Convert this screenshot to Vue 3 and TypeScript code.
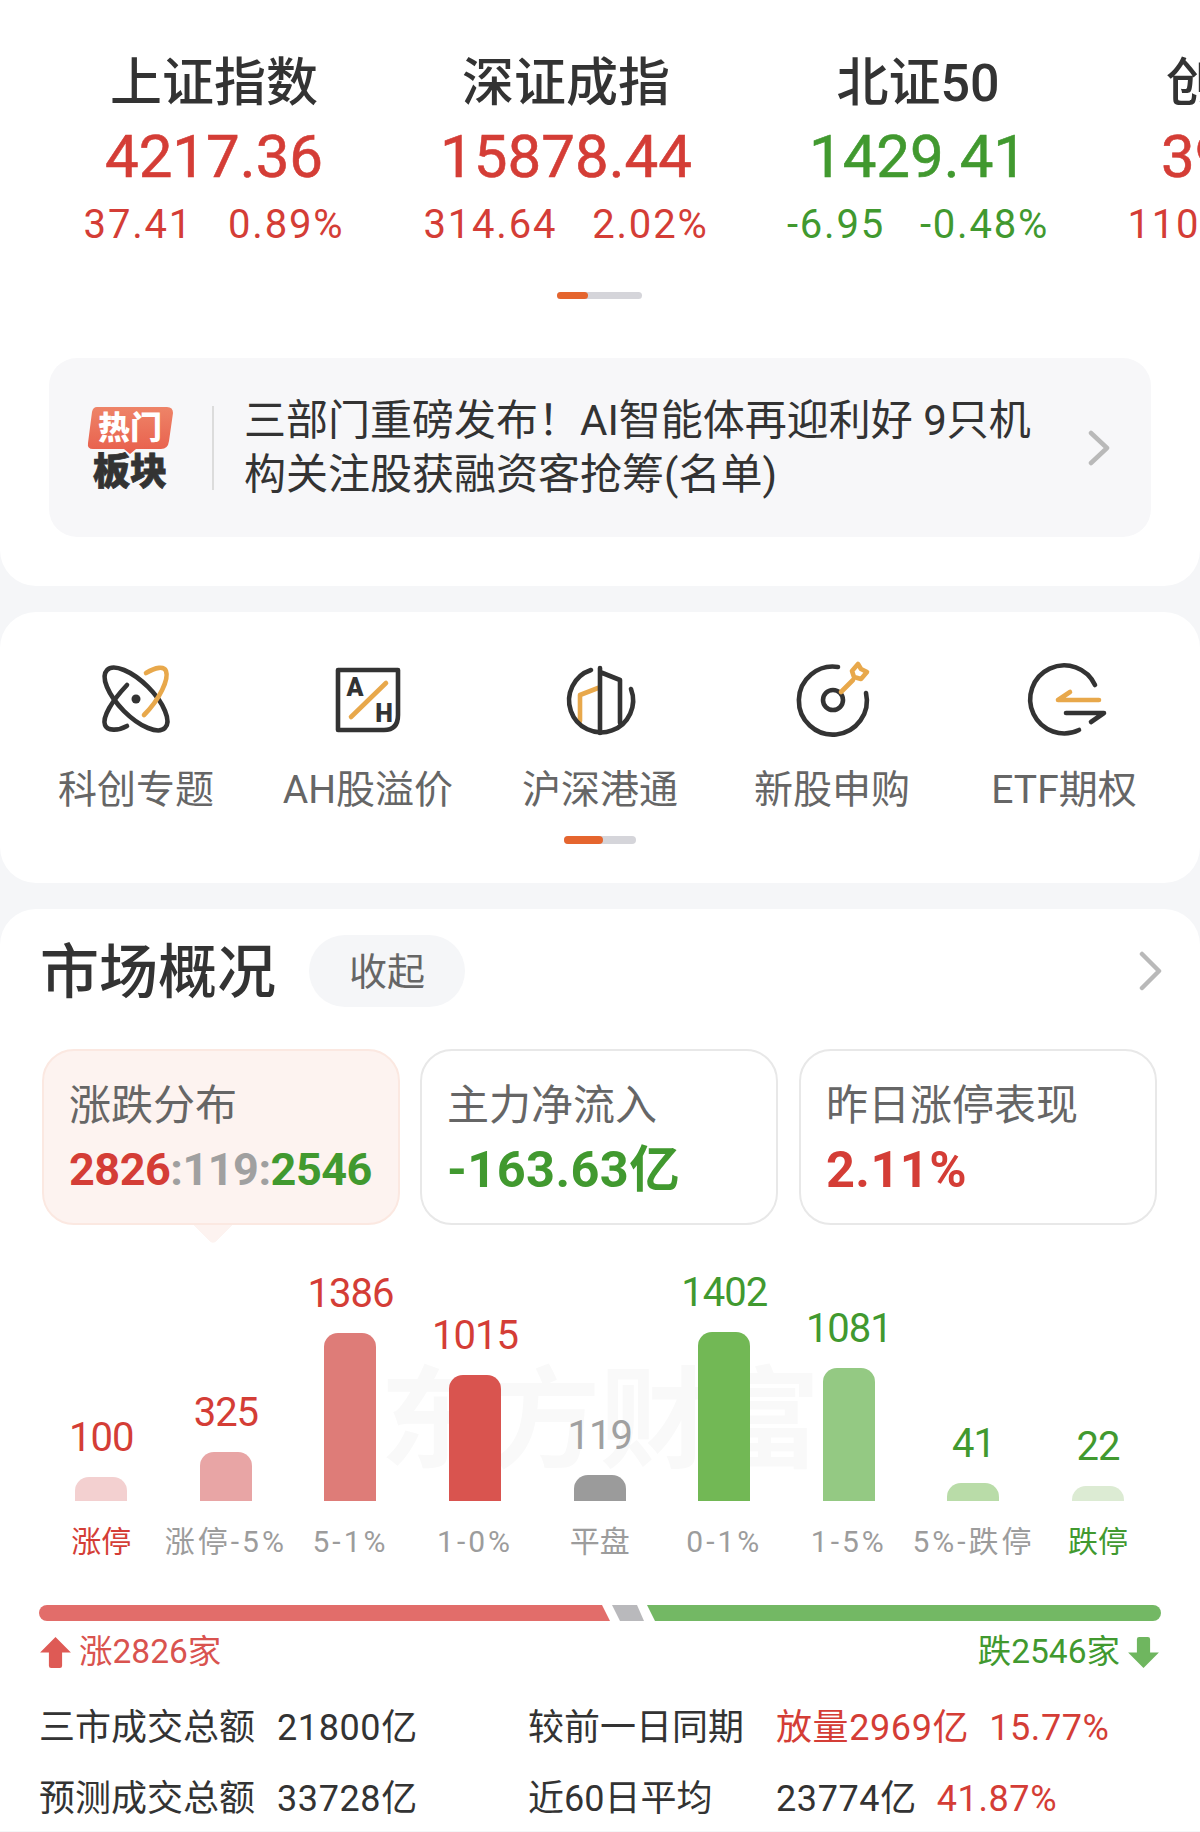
<script setup lang="ts">
type Tone = 'up' | 'down' | 'flat'
interface Quote { name: string; value: string; change: string; pct: string; tone: Tone }
const quotes: Quote[] = [
  { name: '上证指数', value: '4217.36', change: '37.41', pct: '0.89%', tone: 'up' },
  { name: '深证成指', value: '15878.44', change: '314.64', pct: '2.02%', tone: 'up' },
  { name: '北证50', value: '1429.41', change: '-6.95', pct: '-0.48%', tone: 'down' },
  { name: '创业板指', value: '3927.21', change: '110.25', pct: '2.89%', tone: 'up' },
]
interface Bar { value: number; label: string; height: number; color: string; tone: Tone; labelTone?: Tone }
const bars: Bar[] = [
  { value: 100, label: '涨停', height: 24, color: '#f3d0d0', tone: 'up', labelTone: 'up' },
  { value: 325, label: '涨停-5%', height: 49, color: '#e8a5a5', tone: 'up' },
  { value: 1386, label: '5-1%', height: 168, color: '#de7c78', tone: 'up' },
  { value: 1015, label: '1-0%', height: 126, color: '#d9544f', tone: 'up' },
  { value: 119, label: '平盘', height: 26, color: '#9b9b9b', tone: 'flat' },
  { value: 1402, label: '0-1%', height: 169, color: '#72b855', tone: 'down' },
  { value: 1081, label: '1-5%', height: 133, color: '#94c983', tone: 'down' },
  { value: 41, label: '5%-跌停', height: 18, color: '#b9dca8', tone: 'down' },
  { value: 22, label: '跌停', height: 15, color: '#dcebd3', tone: 'down', labelTone: 'down' },
]
const hasDigits = (s: string): boolean => /[0-9]/.test(s)
</script>

<template>
  <div class="page">
    <section class="card top">
      <div class="quotes">
        <div v-for="q in quotes" :key="q.name" class="quote">
          <div class="q-name">{{ q.name }}</div>
          <div class="q-value" :class="q.tone">{{ q.value }}</div>
          <div class="q-change" :class="q.tone"><span>{{ q.change }}</span><span>{{ q.pct }}</span></div>
        </div>
      </div>
      <div class="pager pager-top"><i></i></div>
      <div class="banner">
        <div class="hot">
          <div class="hot-tag">
            <svg class="hot-bg" viewBox="0 0 86 48" width="86" height="48">
              <defs>
                <linearGradient id="hotg" x1="0" y1="0" x2="0" y2="1">
                  <stop offset="0" stop-color="#ee8468" />
                  <stop offset="1" stop-color="#e85f4c" />
                </linearGradient>
              </defs>
              <path d="M10 0H80Q86 0 86 6L82 34Q81 42 74 42H49L43 47L37 42H6Q0 42 1 36L5 5Q6 0 10 0Z" fill="url(#hotg)" />
            </svg>
            <span>热门</span>
          </div>
          <div class="hot-sub">板块</div>
        </div>
        <div class="banner-text">三部门重磅发布！AI智能体再迎利好 9只机构关注股获融资客抢筹(名单)</div>
        <svg class="chev" viewBox="0 0 24 36" width="24" height="36"><path d="M4 3L20 18L4 33" /></svg>
      </div>
    </section>

    <section class="card nav">
      <div class="nav-row">
        <div class="nav-item">
          <svg class="ico" viewBox="0 0 72 72" width="72" height="72">
            <ellipse cx="36" cy="36" rx="41" ry="17" transform="rotate(45 36 36)" class="dk" />
            <circle cx="36" cy="36" r="4.5" fill="#333" />
            <path d="M27 22C12 38 2 54 5 62C7 68 18 68 27 63" class="dk" />
            <path d="M46 10C56 4 64 3 66 8C69 16 60 36 44 52" class="or" />
          </svg>
          <div class="nav-label">科创专题</div>
        </div>
        <div class="nav-item">
          <svg class="ico" viewBox="0 0 72 72" width="72" height="72">
            <path d="M6 7H66V52Q66 67 52 67H6Z" class="dk" />
            <text x="23" y="33" class="ah">A</text>
            <text x="52" y="59" class="ah">H</text>
            <path d="M19 54L54 20" class="or" />
          </svg>
          <div class="nav-label">AH股溢价</div>
        </div>
        <div class="nav-item">
          <svg class="ico" viewBox="0 0 72 72" width="72" height="72">
            <path d="M34 25L16 32V58" class="or" />
            <path d="M27 7A32 32 0 1 0 67 26" class="dk" />
            <path d="M36 5V70M36 9L56 17V60" class="dk" />
          </svg>
          <div class="nav-label">沪深港通</div>
        </div>
        <div class="nav-item">
          <svg class="ico" viewBox="0 0 72 72" width="72" height="72">
            <path d="M42 4A34 34 0 1 0 70 30" class="dk" />
            <circle cx="37" cy="37" r="10" class="dk" />
            <path d="M45 29L57 17" class="or" />
            <path d="M56 8L62 1L65 6L71 9L65 16L58 14Z" class="or" />
          </svg>
          <div class="nav-label">新股申购</div>
        </div>
        <div class="nav-item">
          <svg class="ico" viewBox="0 0 72 72" width="72" height="72">
            <path d="M67 22A34 34 0 1 0 51 67" class="dk" />
            <path d="M71 37H30L42 29" class="or" />
            <path d="M38 50H76L63 59" class="dk" />
          </svg>
          <div class="nav-label">ETF期权</div>
        </div>
      </div>
      <div class="pager pager-nav"><i></i></div>
    </section>

    <section class="card market">
      <div class="m-head">
        <h2>市场概况</h2>
        <div class="pill">收起</div>
        <svg class="chev head-chev" viewBox="0 0 24 40" width="24" height="40"><path d="M4 3L21 20L4 37" /></svg>
      </div>
      <div class="tabs">
        <div class="tab active">
          <div class="t-title">涨跌分布</div>
          <div class="t-value dist"><span class="up">2826</span><span class="flat">:119:</span><span class="down">2546</span></div>
        </div>
        <div class="tab">
          <div class="t-title">主力净流入</div>
          <div class="t-value down">-163.63亿</div>
        </div>
        <div class="tab">
          <div class="t-title">昨日涨停表现</div>
          <div class="t-value up">2.11%</div>
        </div>
      </div>

      <div class="chart">
        <div class="watermark">东方财富</div>
        <div v-for="b in bars" :key="b.label" class="col">
          <div class="plot">
            <div class="b-value" :class="b.tone">{{ b.value }}</div>
            <div class="bar" :style="{ height: b.height + 'px', background: b.color }"></div>
          </div>
          <div class="b-label" :class="[b.labelTone, { wide: hasDigits(b.label) }]">{{ b.label }}</div>
        </div>
      </div>

      <div class="seg">
        <div class="seg-red"></div>
        <div class="seg-gray"></div>
        <div class="seg-green"></div>
      </div>
      <div class="legend">
        <div class="leg up">
          <svg viewBox="0 0 30 30" width="33" height="33"><path d="M15 1L29 15H21V27Q21 29 19 29H11Q9 29 9 27V15H1Z" fill="#de5a55" /></svg>
          <span>涨2826家</span>
        </div>
        <div class="leg down">
          <span>跌2546家</span>
          <svg viewBox="0 0 30 30" width="33" height="33"><path d="M15 29L29 15H21V3Q21 1 19 1H11Q9 1 9 3V15H1Z" fill="#6fb65f" /></svg>
        </div>
      </div>
      <div class="stats">
        <div class="stat-row">
          <span class="s-l1">三市成交总额</span><span class="s-v1">21800亿</span>
          <span class="s-l2">较前一日同期</span>
          <span class="s-v2 up">放量2969亿<em>15.77%</em></span>
        </div>
        <div class="stat-row">
          <span class="s-l1">预测成交总额</span><span class="s-v1">33728亿</span>
          <span class="s-l2">近60日平均</span>
          <span class="s-v2">23774亿<em class="up">41.87%</em></span>
        </div>
      </div>
    </section>
  </div>
</template>

<style>
html, body { margin: 0; background: #f5f6f8; overflow: hidden; }
</style>

<style scoped>
.page {
  width: 1200px;
  height: 1832px;
  overflow: hidden;
  background: #f5f6f8;
  font-family: Roboto, "Noto Sans CJK SC", sans-serif;
  color: #333;
}
.card { background: #fff; border-radius: 36px; }
.up { color: #d43d36; }
.down { color: #41992f; }
.flat { color: #a0a0a0; }

.top { border-radius: 0 0 36px 36px; padding: 52px 0 49px; }
.quotes { display: flex; padding-left: 38px; overflow: hidden; }
.quote { flex: 0 0 352px; text-align: center; }
.q-name { font-size: 52px; line-height: 64px; color: #333; font-weight: 500; }
.q-value { font-size: 60px; line-height: 72px; margin-top: 5px; font-weight: 400; -webkit-text-stroke: 0.6px currentColor; white-space: nowrap; }
.q-change { display: flex; justify-content: center; gap: 35px; font-size: 40px; line-height: 44px; margin-top: 10px; white-space: nowrap; letter-spacing: 1.8px; }

.pager { position: relative; height: 7px; background: #d5d5da; border-radius: 4px; }
.pager i { position: absolute; left: 0; top: 0; bottom: 0; background: #e5652e; border-radius: 4px; }
.pager-top { width: 85px; margin: 45px 0 0 557px; }
.pager-top i { width: 31px; }
.pager-nav { width: 72px; height: 8px; margin: 21px 0 0 564px; }
.pager-nav i { width: 39px; }

.banner {
  display: flex;
  align-items: center;
  margin: 59px 49px 0;
  height: 179px;
  background: #f7f7f9;
  border-radius: 28px;
  box-sizing: border-box;
  padding: 0 40px 0 38px;
}
.hot { flex: 0 0 86px; display: flex; flex-direction: column; align-items: center; margin-top: 4px; }
.hot-tag { position: relative; width: 86px; height: 47px; text-align: center; }
.hot-bg { position: absolute; left: 0; top: 0; }
.hot-tag span { position: relative; color: #fff; font-size: 32px; line-height: 42px; font-weight: 900; display: block; }
.hot-sub { font-size: 37px; line-height: 38px; font-weight: 900; color: #333; -webkit-text-stroke: 0.8px #333; }
.banner-text {
  flex: 1;
  margin: 0 43px 0 39px;
  padding-left: 32px;
  position: relative;
  font-size: 42px;
  line-height: 54px;
  color: #333;
}
.banner-text::before {
  content: "";
  position: absolute;
  left: 0;
  top: 12px;
  bottom: 12px;
  width: 2px;
  background: #dcdcdc;
}
.chev { flex: none; }
.chev path { fill: none; stroke: #b9b9b9; stroke-width: 4.5; stroke-linecap: round; stroke-linejoin: round; }

.nav { margin-top: 26px; padding: 51px 0 39px; }
.nav-row { display: grid; grid-template-columns: repeat(5, 232px); padding-left: 20px; }
.nav-item { display: flex; flex-direction: column; align-items: center; }
.ico { overflow: visible; }
.dk { fill: none; stroke: #333; stroke-width: 4.6; stroke-linecap: round; stroke-linejoin: round; }
.or { fill: none; stroke: #e8a84b; stroke-width: 4.6; stroke-linecap: round; stroke-linejoin: round; }
.ah { font-family: Roboto, sans-serif; font-size: 25px; font-weight: 900; fill: #333; text-anchor: middle; }
.nav-label { margin-top: 30px; font-size: 39px; line-height: 50px; color: #666; white-space: nowrap; }

.market { margin-top: 26px; padding-top: 26px; border-radius: 36px 36px 0 0; height: 922px; box-sizing: border-box; }
.m-head { display: flex; align-items: center; height: 72px; padding: 0 38px 0 40px; }
.m-head h2 { margin: 4px 0 0; font-size: 59px; line-height: 72px; font-weight: 500; color: #333; }
.pill {
  margin-left: 33px;
  width: 156px;
  height: 72px;
  border-radius: 36px;
  background: #f5f6f8;
  color: #666;
  font-size: 38px;
  line-height: 74px;
  text-align: center;
}
.head-chev { margin-left: auto; }

.tabs { display: flex; gap: 20px; margin: 42px 42px 0 42px; }
.tab {
  position: relative;
  flex: 0 0 358px;
  height: 176px;
  box-sizing: border-box;
  border: 2px solid #e8e8e8;
  border-radius: 32px;
  padding: 30px 0 0 25px;
}
.tab:last-child { margin-left: 1px; }
.tab.active { background: #fdf3f0; border-color: #fbe8e1; }
.tab.active::after {
  content: "";
  position: absolute;
  left: 155px;
  bottom: -16px;
  width: 28px;
  height: 28px;
  background: #fdf3f0;
  transform: rotate(45deg);
  border-radius: 0 0 5px 0;
  clip-path: polygon(100% 0, 100% 100%, 0 100%);
}
.t-title { font-size: 42px; line-height: 50px; color: #666; white-space: nowrap; }
.t-value { font-size: 50.5px; line-height: 54px; margin-top: 12px; font-weight: 700; white-space: nowrap; letter-spacing: 0.4px; }
.t-value.dist { font-size: 45px; letter-spacing: -0.5px; }

.chart {
  position: relative;
  display: grid;
  grid-template-columns: repeat(9, 124.6px);
  margin: 15px 0 0 39px;
}
.watermark {
  position: absolute;
  left: 341px;
  top: 122px;
  font-size: 110px;
  line-height: 120px;
  font-weight: 700;
  color: #f9f9f9;
  white-space: nowrap;
}
.col { position: relative; display: flex; flex-direction: column; align-items: center; }
.plot { height: 261px; display: flex; flex-direction: column; justify-content: flex-end; align-items: center; }
.b-value { font-size: 40px; line-height: 48px; margin-bottom: 15px; letter-spacing: -1px; }
.bar { width: 52px; border-radius: 14px 14px 0 0; }
.b-label { margin-top: 21px; font-size: 30px; line-height: 40px; color: #9c9c9c; white-space: nowrap; }
.b-label.wide { letter-spacing: 3px; }
.b-label.up { color: #d43d36; }
.b-label.down { color: #41992f; }

.seg { display: flex; margin: 43px 0 0 39px; width: 1122px; height: 16px; }
.seg-red { width: 571px; background: #e26d6a; border-radius: 8px 0 0 8px; clip-path: polygon(0 0, 563px 0, 100% 100%, 0 100%); }
.seg-gray { width: 32px; margin-left: 2px; background: #b9b9bc; clip-path: polygon(0 0, 25px 0, 100% 100%, 8px 100%); }
.seg-green { width: 514px; margin-left: 3px; background: #73b864; border-radius: 0 8px 8px 0; clip-path: polygon(0 0, 100% 0, 100% 100%, 8px 100%); }

.legend { display: flex; justify-content: space-between; margin: 9px 40px 0 39px; height: 44px; }
.leg { display: flex; align-items: center; gap: 7px; font-size: 33.5px; line-height: 44px; }
.leg.up { color: #d9534f; }
.leg.down { color: #41992f; }

.stats { margin: 29px 0 0 39px; }
.stat-row { display: flex; height: 71px; line-height: 50px; font-size: 36px; color: #333; white-space: nowrap; }
.s-l1 { width: 238px; }
.s-v1 { width: 251px; letter-spacing: 0.6px; }
.s-l2 { width: 248px; }
.s-v2 { letter-spacing: 0.6px; }
.s-v2 em { font-style: normal; margin-left: 20px; }
</style>
